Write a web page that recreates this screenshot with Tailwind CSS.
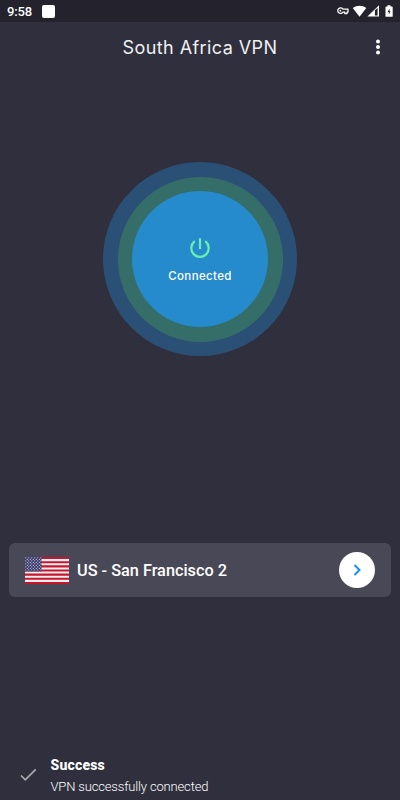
<!DOCTYPE html>
<html lang="en">
<head>
    <meta charset="UTF-8">
    <meta name="viewport" content="width=device-width, initial-scale=1.0">
    <title>South Africa VPN</title>
    <script src="https://cdn.jsdelivr.net/npm/@tailwindcss/browser@4"></script>
</head>
<body class="bg-[#302f3d] text-white font-['Roboto',sans-serif]">
    <div class="flex flex-col w-[400px] h-[800px] overflow-hidden">
        <!-- Status bar -->
        <div class="flex items-center h-[22px] shrink-0 bg-[#23222d] px-[7px]">
            <span class="text-[13px] leading-[22px] font-medium tracking-[-0.15px] w-[35px] pt-px">9:58</span>
            <span class="size-[13px] rounded-[2px] bg-white"></span>
            <svg class="ml-auto" width="57" height="14" viewBox="0 0 57 14" fill="#fff">
                <path fill="none" stroke="#fff" stroke-width="1.3" stroke-linejoin="round" d="M7 5.2h5v2.9h-1v1.5H8.8V8.1H7a2.8 2.8 0 1 1 0-2.9z"/>
                <circle cx="4.4" cy="6.7" r=".9"/>
                <path d="M16.8 4.1c4-3.1 9.5-3.1 13.5 0L23.5 12.8z"/>
                <path fill-rule="evenodd" d="M43 1.2v11.4H31.4zM38.9 6.3v5.2h2.7V3.9z"/>
                <path fill-rule="evenodd" d="M51.5 1.3h3v1.2h1.3q.9 0 .9.9v8.5q0 .9-.9.9h-5.4q-.9 0-.9-.9V3.4q0-.9.9-.9h1.1zM53.5 4.8l-1.9 3.3h1.2v2.5l1.8-3.4h-1.1z"/>
            </svg>
        </div>

        <!-- Title bar -->
        <header class="grid grid-cols-[44px_1fr_44px] items-center h-[50px] shrink-0">
            <h1 class="col-start-2 text-center font-['Inter',sans-serif] text-[18px] tracking-[0.42px] whitespace-nowrap text-[#f0f0f2]">South Africa VPN</h1>
            <svg class="justify-self-center" width="6" height="18" viewBox="0 0 6 18" fill="#fff">
                <circle cx="3" cy="3.5" r="2"/>
                <circle cx="3" cy="9" r="2"/>
                <circle cx="3" cy="14.5" r="2"/>
            </svg>
        </header>

        <!-- Connect button -->
        <main class="flex justify-center pt-[90px] h-[471px] shrink-0">
            <div class="flex items-center justify-center size-[194px] rounded-full bg-[#2b5076]">
                <div class="flex items-center justify-center size-[165px] rounded-full bg-[#356d68]">
                    <button class="flex flex-col items-center size-[136px] rounded-full bg-[#268bcd] pt-[46px]">
                        <svg width="22" height="22" viewBox="0 0 22 22" fill="none" stroke="#69f0ae" stroke-width="2.2">
                            <path d="M11 1.2v10.8M5.8 4.2a8.7 8.7 0 1 0 10.4 0"/>
                        </svg>
                        <span class="mt-[9px] font-['Inter',sans-serif] text-[11.5px] leading-4 font-medium tracking-[0.35px]">Connected</span>
                    </button>
                </div>
            </div>
        </main>

        <!-- Server -->
        <div class="flex items-center mx-[9px] h-[54px] shrink-0 rounded-[6px] bg-[#494856] px-4">
            <svg width="44" height="27" viewBox="0 0 44 27">
                <defs>
                    <pattern id="stars" width="3" height="3" patternUnits="userSpaceOnUse">
                        <circle cx=".8" cy=".8" r=".6" fill="#d5d5e8"/>
                        <circle cx="2.3" cy="2.3" r=".6" fill="#d5d5e8"/>
                    </pattern>
                </defs>
                <rect width="44" height="27" fill="#f4eff1"/>
                <path stroke="#c5162e" stroke-width="2.077" d="M0 1.04h44M0 5.19h44M0 9.35h44M0 13.5h44M0 17.65h44M0 21.81h44M0 25.96h44"/>
                <rect width="16.5" height="14.5" fill="#3c3b6e"/>
                <rect width="16.5" height="14.5" fill="url(#stars)"/>
            </svg>
            <span class="ml-[8px] pt-0.5 text-[16.3px] font-medium whitespace-nowrap">US - San Francisco 2</span>
            <button class="ml-auto flex items-center justify-center size-[36px] rounded-full bg-white">
                <svg width="10" height="12" viewBox="0 0 10 12" fill="none" stroke="#1191f1" stroke-width="2">
                    <path d="M2.5 1 7.5 6l-5 5"/>
                </svg>
            </button>
        </div>

        <!-- Snackbar -->
        <div class="flex items-center mt-auto h-[49px] shrink-0 pl-[20px]">
            <svg class="mb-0.5" width="17" height="14" viewBox="0 0 17 14" fill="none" stroke="#aaaab0" stroke-width="1.7">
                <path d="m1 7.5 4.3 4.3L15.7 1.4"/>
            </svg>
            <div class="ml-[13.5px] pt-px">
                <p class="text-[14px] leading-[21px] font-extrabold tracking-[0.2px]">Success</p>
                <p class="text-[13px] leading-[21px] font-light tracking-[-0.16px]">VPN successfully connected</p>
            </div>
        </div>
    </div>
</body>
</html>
